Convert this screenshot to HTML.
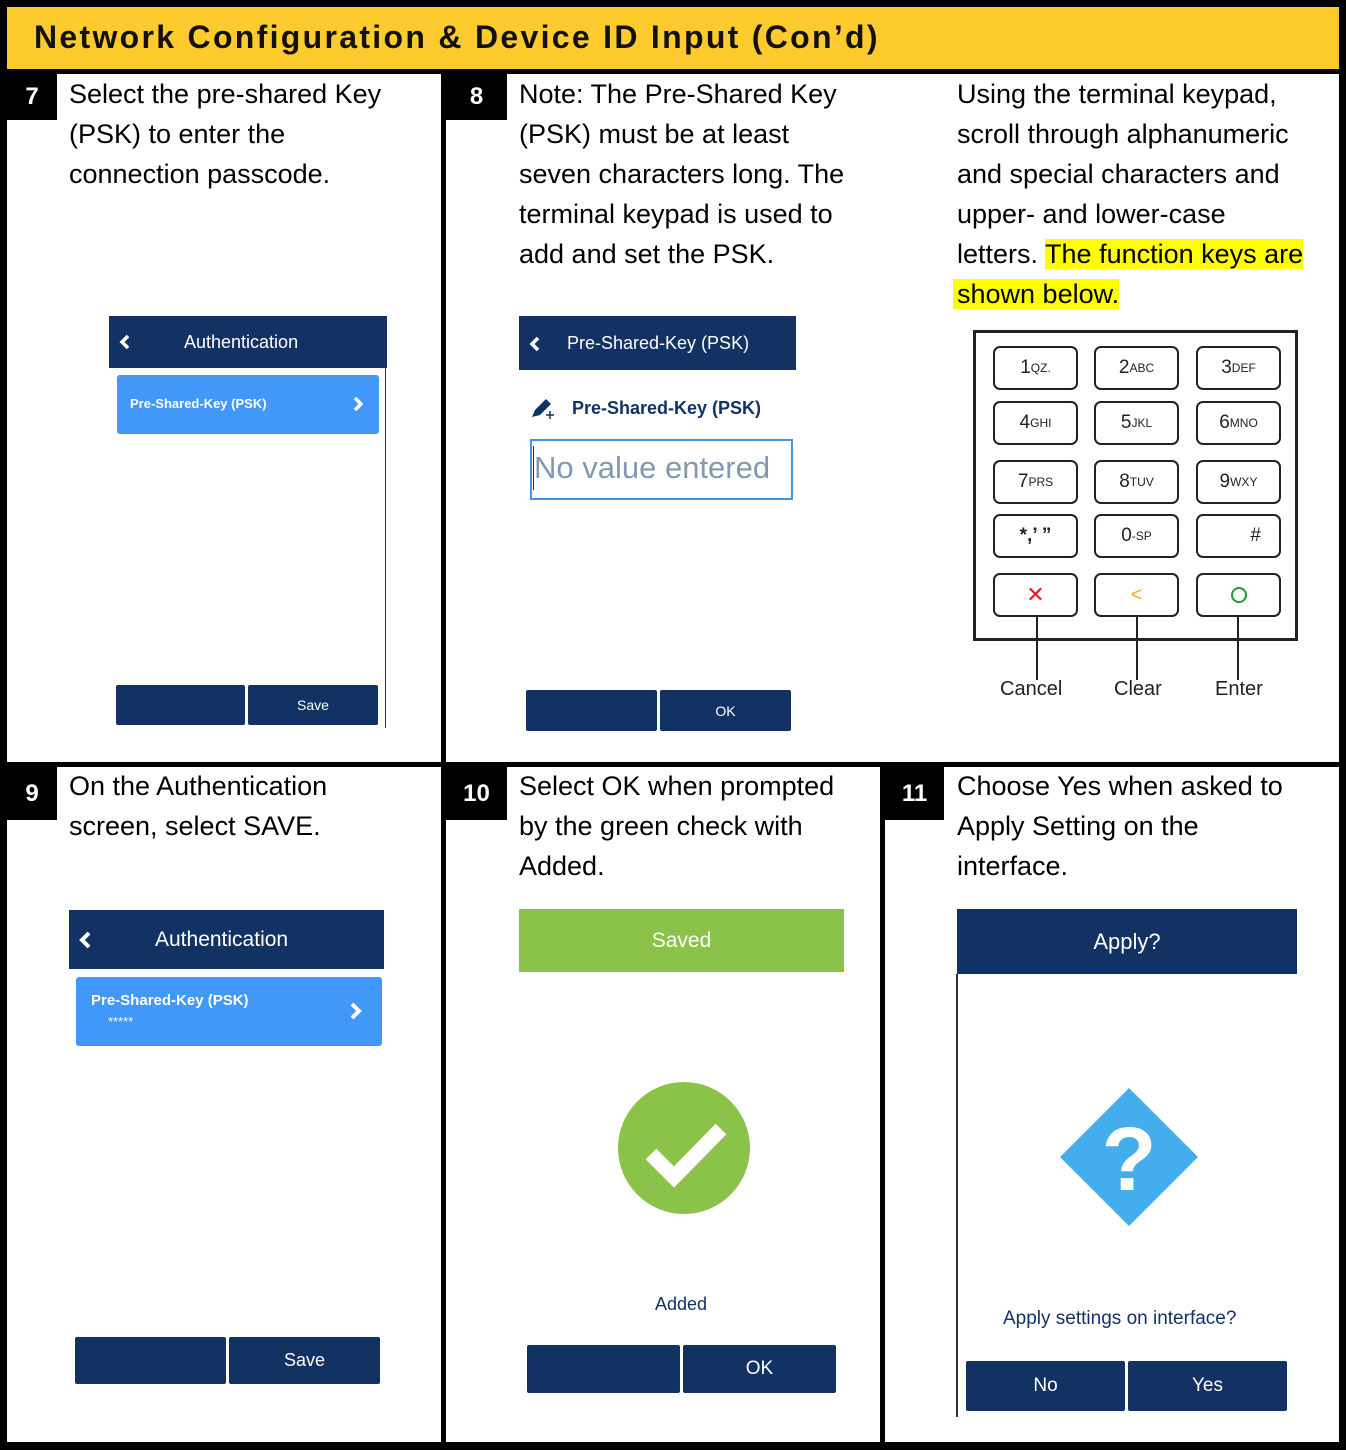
<!DOCTYPE html>
<html><head><meta charset="utf-8"><style>
*{margin:0;padding:0;box-sizing:border-box}
body{width:1346px;height:1450px;background:#000;position:relative;overflow:hidden;font-family:"Liberation Sans",sans-serif}
.a{position:absolute}
.w{background:#fff}
.num{position:absolute;background:#000;color:#fff;font-weight:bold;font-size:24px;display:flex;align-items:center;justify-content:center}
.txt{position:absolute;font-size:27px;line-height:40px;color:#000;white-space:nowrap}
.nav{position:absolute;background:#133264;color:#fff;display:flex;align-items:center}
.btn{position:absolute;background:#133264;color:#fff;display:flex;align-items:center;justify-content:center;border-radius:2px}
.card{position:absolute;background:#4198f8;color:#fff;border-radius:3px}
.key{position:absolute;width:85px;height:44px;border:2px solid #222;border-radius:7px;font-size:19px;color:#222;display:flex;align-items:center;justify-content:center}
.key sup{font-size:12px;vertical-align:7px}
.hl{background:#ffff00}
</style></head><body>
<div class="a" style="left:7px;top:7px;width:1332px;height:62px;background:#fecb2f"></div>
<div class="a" style="left:34px;top:19px;font-size:32px;font-weight:bold;letter-spacing:2.3px;color:#111;white-space:nowrap">Network Configuration &amp; Device ID Input (Con’d)</div>
<div class="a w" style="left:7px;top:74px;width:434px;height:688px"></div>
<div class="a w" style="left:446px;top:74px;width:893px;height:688px"></div>
<div class="a w" style="left:7px;top:767px;width:434px;height:675px"></div>
<div class="a w" style="left:446px;top:767px;width:434px;height:675px"></div>
<div class="a w" style="left:885px;top:767px;width:454px;height:675px"></div>

<div class="num" style="left:7px;top:74px;width:50px;height:46px">7</div>
<div class="num" style="left:446px;top:74px;width:61px;height:46px">8</div>
<div class="num" style="left:7px;top:767px;width:50px;height:53px">9</div>
<div class="num" style="left:446px;top:767px;width:61px;height:53px">10</div>
<div class="num" style="left:885px;top:767px;width:59px;height:53px">11</div>

<div class="txt" style="left:69px;top:74px">Select the pre-shared Key<br>(PSK) to enter the<br>connection passcode.</div>
<div class="txt" style="left:519px;top:74px">Note: The Pre-Shared Key<br>(PSK) must be at least<br>seven characters long. The<br>terminal keypad is used to<br>add and set the PSK.</div>
<div class="txt" style="left:957px;top:74px">Using the terminal keypad,<br>scroll through alphanumeric<br>and special characters and<br>upper- and lower-case<br>letters. <span class="hl">The function keys are</span><br><span class="hl" style="margin-left:-4px;padding-left:4px">shown below.</span></div>
<div class="txt" style="left:69px;top:766px">On the Authentication<br>screen, select SAVE.</div>
<div class="txt" style="left:519px;top:766px">Select OK when prompted<br>by the green check with<br>Added.</div>
<div class="txt" style="left:957px;top:766px">Choose Yes when asked to<br>Apply Setting on the<br>interface.</div>

<!-- step 7 screen -->
<div class="nav" style="left:109px;top:316px;width:278px;height:52px;font-size:18px"><svg class="a" style="left:10px;top:18px" width="12" height="16" viewBox="0 0 12 16"><path d="M9 2 L3 8 L9 14" stroke="#fff" stroke-width="3.5" fill="none"/></svg><span style="position:absolute;left:75px">Authentication</span></div>
<div class="a" style="left:385px;top:368px;width:1px;height:360px;background:#333"></div>
<div class="card" style="left:117px;top:375px;width:262px;height:59px"><span style="position:absolute;left:13px;top:21px;font-size:13px;font-weight:bold">Pre-Shared-Key (PSK)</span><svg class="a" style="right:16px;top:21px" width="10" height="16" viewBox="0 0 10 16"><path d="M2 2 L8 8 L2 14" stroke="#fff" stroke-width="3.5" fill="none"/></svg></div>
<div class="btn" style="left:116px;top:685px;width:129px;height:40px"></div>
<div class="btn" style="left:248px;top:685px;width:130px;height:40px;font-size:14px">Save</div>

<!-- step 8 screen -->
<div class="nav" style="left:519px;top:316px;width:277px;height:54px;font-size:18px"><svg class="a" style="left:10px;top:20px" width="12" height="16" viewBox="0 0 12 16"><path d="M9 2 L3 8 L9 14" stroke="#fff" stroke-width="3.5" fill="none"/></svg><span style="position:absolute;left:48px">Pre-Shared-Key (PSK)</span></div>
<svg class="a" style="left:530px;top:397px" width="30" height="24" viewBox="0 0 30 24"><path d="M2 20 L5 13 L16 2 L21 7 L10 18 Z" fill="#133264"/><path d="M20 14v8M16 18h8" stroke="#133264" stroke-width="1.5"/></svg>
<div class="a" style="left:572px;top:398px;font-size:18px;font-weight:bold;color:#133264">Pre-Shared-Key (PSK)</div>
<div class="a" style="left:530px;top:439px;width:263px;height:61px;border:2px solid #4a90e2"></div>
<div class="a" style="left:533px;top:446px;width:1px;height:44px;background:#133264"></div>
<div class="a" style="left:534px;top:450px;font-size:31px;color:#8497b0;white-space:nowrap">No value entered</div>
<div class="btn" style="left:526px;top:690px;width:131px;height:41px"></div>
<div class="btn" style="left:660px;top:690px;width:131px;height:41px;font-size:14px">OK</div>

<!-- keypad -->
<div class="a" style="left:973px;top:330px;width:325px;height:311px;border:3px solid #222"></div>
<div class="key" style="left:993px;top:346px">1<sup>QZ.</sup></div>
<div class="key" style="left:1094px;top:346px">2<sup>ABC</sup></div>
<div class="key" style="left:1196px;top:346px">3<sup>DEF</sup></div>
<div class="key" style="left:993px;top:401px">4<sup>GHI</sup></div>
<div class="key" style="left:1094px;top:401px">5<sup>JKL</sup></div>
<div class="key" style="left:1196px;top:401px">6<sup>MNO</sup></div>
<div class="key" style="left:993px;top:460px">7<sup>PRS</sup></div>
<div class="key" style="left:1094px;top:460px">8<sup>TUV</sup></div>
<div class="key" style="left:1196px;top:460px">9<sup>WXY</sup></div>
<div class="key" style="left:993px;top:514px;font-weight:bold">*,’ ”</div>
<div class="key" style="left:1094px;top:514px">0<sup>-SP</sup></div>
<div class="key" style="left:1196px;top:514px;justify-content:flex-end;padding-right:18px">#</div>
<div class="key" style="left:993px;top:573px;color:#e31b23;font-size:22px">✕</div>
<div class="key" style="left:1094px;top:573px;color:#f5a800;font-size:20px">&lt;</div>
<div class="key" style="left:1196px;top:573px"><span style="width:16px;height:16px;border:2.5px solid #1a9a3a;border-radius:50%;display:block"></span></div>
<div class="a" style="left:1036px;top:617px;width:2px;height:63px;background:#222"></div>
<div class="a" style="left:1136px;top:617px;width:2px;height:63px;background:#222"></div>
<div class="a" style="left:1237px;top:617px;width:2px;height:63px;background:#222"></div>
<div class="a" style="left:1000px;top:678px;font-size:20px;color:#222">Cancel</div>
<div class="a" style="left:1114px;top:678px;font-size:20px;color:#222">Clear</div>
<div class="a" style="left:1215px;top:678px;font-size:20px;color:#222">Enter</div>

<!-- step 9 -->
<div class="nav" style="left:69px;top:910px;width:315px;height:59px;font-size:21px"><svg class="a" style="left:10px;top:21px" width="13" height="18" viewBox="0 0 13 18"><path d="M10 2 L3 9 L10 16" stroke="#fff" stroke-width="4" fill="none"/></svg><span style="position:absolute;left:86px">Authentication</span></div>
<div class="card" style="left:76px;top:977px;width:306px;height:69px"><span style="position:absolute;left:15px;top:15px;font-size:15px;font-weight:bold">Pre-Shared-Key (PSK)</span><span style="position:absolute;left:32px;top:37px;font-size:13px">*****</span><svg class="a" style="right:20px;top:25px" width="12" height="18" viewBox="0 0 12 18"><path d="M2 2 L9 9 L2 16" stroke="#fff" stroke-width="4" fill="none"/></svg></div>
<div class="btn" style="left:75px;top:1337px;width:151px;height:47px"></div>
<div class="btn" style="left:229px;top:1337px;width:151px;height:47px;font-size:18px">Save</div>

<!-- step 10 -->
<div class="a" style="left:519px;top:909px;width:325px;height:63px;background:#8bc34a;color:#fff;font-size:21px;display:flex;align-items:center;justify-content:center">Saved</div>
<svg class="a" style="left:618px;top:1082px" width="132" height="132" viewBox="0 0 132 132"><circle cx="66" cy="66" r="66" fill="#8bc34a"/><path d="M33 72 L56 95 L103 47" stroke="#fff" stroke-width="15" fill="none"/></svg>
<div class="a" style="left:655px;top:1294px;font-size:18px;color:#133264">Added</div>
<div class="btn" style="left:527px;top:1345px;width:153px;height:48px"></div>
<div class="btn" style="left:683px;top:1345px;width:153px;height:48px;font-size:19px">OK</div>

<!-- step 11 -->
<div class="nav" style="left:957px;top:909px;width:340px;height:65px;font-size:22px;justify-content:center">Apply?</div>
<div class="a" style="left:956px;top:974px;width:2px;height:443px;background:#333"></div>
<svg class="a" style="left:1060px;top:1088px" width="138" height="138" viewBox="0 0 138 138"><path d="M69 0 L138 69 L69 138 L0 69 Z" fill="#44adec"/><text x="69" y="102" text-anchor="middle" font-family="Liberation Sans" font-weight="bold" font-size="90" fill="#fff">?</text></svg>
<div class="a" style="left:1003px;top:1308px;font-size:19px;color:#133264">Apply settings on interface?</div>
<div class="btn" style="left:966px;top:1361px;width:159px;height:50px;font-size:19px">No</div>
<div class="btn" style="left:1128px;top:1361px;width:159px;height:50px;font-size:19px">Yes</div>
</body></html>
